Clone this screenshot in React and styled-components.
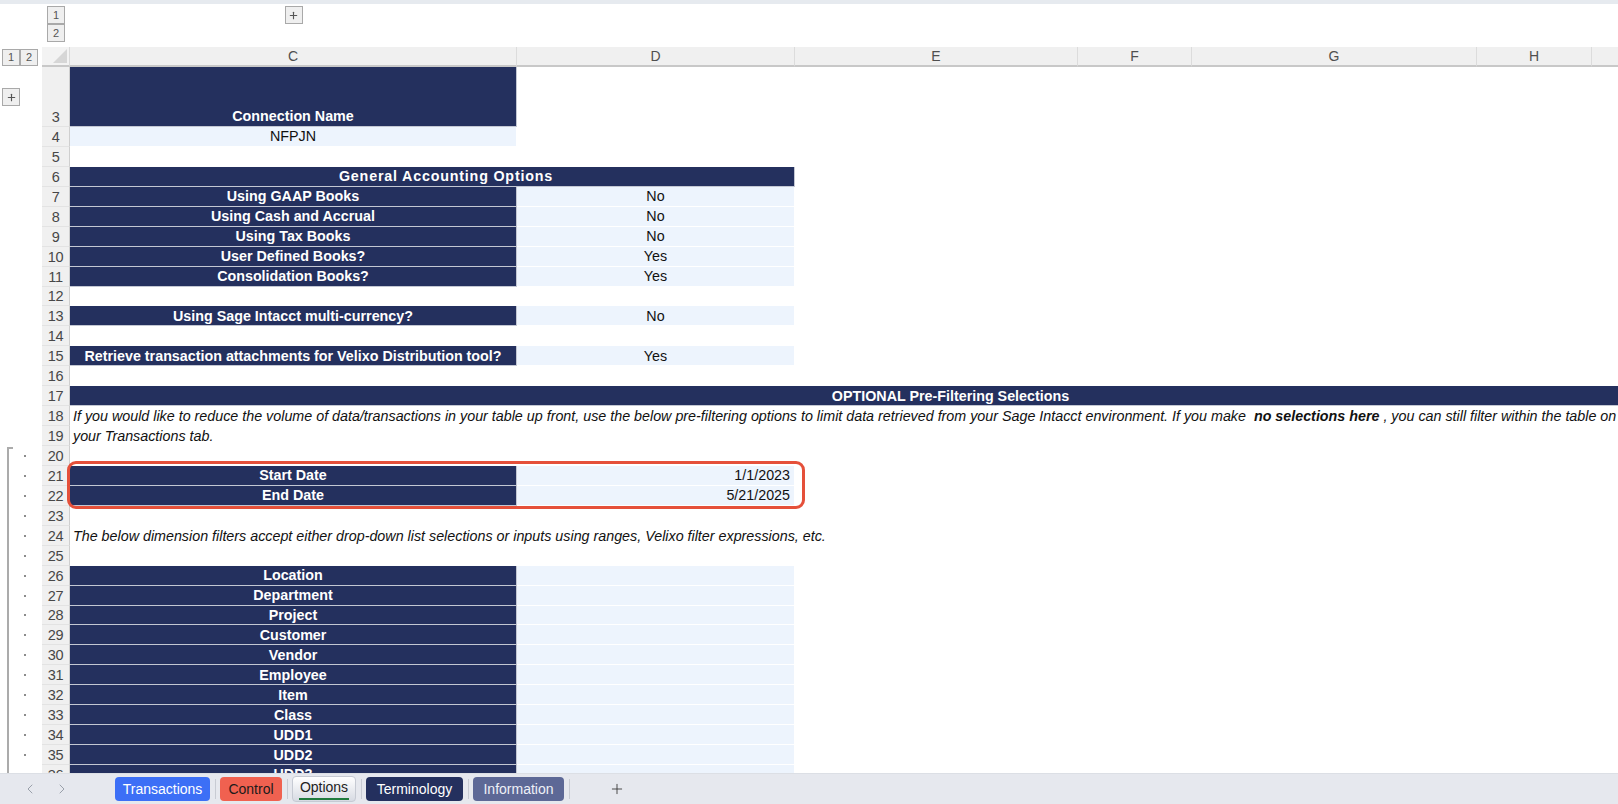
import { createGlobalStyle, styled, css } from "styled-components";
import { ChevronLeft, ChevronRight, Plus } from "lucide-react";

const COLS = "42px 28px 447px 278px 283px 114px 285px 115px 240px";
const NAVY = "#24305e";
const PALE = "#edf4fd";

const GlobalStyle = createGlobalStyle`
  html, body {
    margin: 0;
    padding: 0;
    overflow: hidden;
    background: #fff;
  }
  body {
    font-family: "Liberation Sans", Arial, sans-serif;
  }
  * {
    box-sizing: border-box;
  }
`;

const Page = styled.div`
  width: 1618px;
  height: 804px;
  display: flex;
  flex-direction: column;
  overflow: hidden;
`;

const TopStrip = styled.div`
  flex: none;
  height: 4px;
  background: #e6eaef;
`;

const OutlineTop = styled.div`
  flex: none;
  height: 43px;
  padding-top: 2px;
  display: grid;
  grid-template-columns: ${COLS};
`;

const LevelStack = styled.div`
  grid-column: 2;
  display: flex;
  flex-direction: column;
  align-items: center;
`;

const OutlineBtn = styled.div`
  width: 18px;
  height: ${(p) => p.$h || 18}px;
  border: 1px solid #a9a9a9;
  background: #efefef;
  color: #555;
  font-size: 11px;
  display: flex;
  align-items: center;
  justify-content: center;
  & + & {
    margin-top: ${(p) => (p.$row ? 0 : -1)}px;
  }
`;

const CollapseSlot = styled.div`
  grid-column: 3;
  display: flex;
  justify-content: center;
  align-items: flex-start;
`;

const Sheet = styled.div`
  flex: 1;
  overflow: hidden;
  position: relative;
`;

const Row = styled.div`
  display: grid;
  grid-template-columns: ${COLS};
  height: ${(p) => p.$h || 19.95}px;
`;

const LevelRow = styled.div`
  display: flex;
  padding-left: 2px;
  align-items: center;
`;

const Corner = styled.div`
  background: #f3f3f3;
  border-bottom: 2px solid #c8c8c8;
  border-right: 1px solid #dadada;
  display: flex;
  justify-content: flex-end;
  align-items: flex-end;
  padding: 0 2px 2px 0;
  &::after {
    content: "";
    width: 0;
    height: 0;
    border-style: solid;
    border-width: 0 0 14px 14px;
    border-color: transparent transparent #d6d6d6 transparent;
  }
`;

const ColHead = styled.div`
  background: #f0f0f0;
  border-bottom: 2px solid #c8c8c8;
  border-right: 1px solid #dcdcdc;
  color: #4f4f4f;
  font-size: 14px;
  display: flex;
  align-items: center;
  justify-content: center;
`;

const OutlineCell = styled.div`
  display: flex;
  align-items: ${(p) => (p.$top ? "flex-start" : "center")};
  padding-left: ${(p) => (p.$top ? 2 : 7)}px;
  padding-top: ${(p) => (p.$top ? 21 : 0)}px;
`;

const Bracket = styled.span`
  align-self: stretch;
  width: 6px;
  border-left: 2px solid #ababab;
  ${(p) =>
    p.$first &&
    css`
      border-top: 2px solid #ababab;
      margin-top: 1px;
    `}
`;

const Dot = styled.span`
  width: 2px;
  height: 2px;
  background: #8c8c8c;
  margin-left: 11px;
`;

const RowNum = styled.div`
  background: #f0f0f0;
  border-right: 1px solid #cfcfcf;
  border-bottom: 1px solid #e3e3e3;
  color: #474747;
  font-size: 14.5px;
  letter-spacing: -0.4px;
  display: flex;
  align-items: flex-end;
  justify-content: center;
  padding-bottom: 1px;
`;

const tones = {
  dark: css`
    background: ${NAVY};
    color: #fff;
    font-weight: bold;
    border-bottom: 1px solid #c3c7d3;
    border-right: 1px solid #c3c7d3;
  `,
  light: css`
    background: ${PALE};
    color: #111;
    border-bottom: 1px solid #fff;
    border-right: 1px solid #fff;
  `,
};

const Cell = styled.div`
  grid-column: span ${(p) => p.$span || 1};
  display: flex;
  align-items: ${(p) => (p.$bottom ? "flex-end" : "center")};
  justify-content: ${(p) =>
    p.$align === "right" ? "flex-end" : p.$align === "left" ? "flex-start" : "center"};
  padding: 0 4px ${(p) => (p.$bottom ? 2 : 0)}px ${(p) => p.$indent || 4}px;
  font-size: 14.3px;
  letter-spacing: ${(p) => p.$spread || 0}px;
  white-space: nowrap;
  overflow: hidden;
  ${(p) => tones[p.$tone]}
`;

const Note = styled.div`
  grid-column: 3 / -1;
  display: flex;
  align-items: center;
  padding-left: 3px;
  font-size: 14.3px;
  font-style: italic;
  color: #111;
  white-space: pre;
  b {
    font-weight: bold;
  }
`;

const Highlight = styled.div`
  position: relative;
  &::after {
    content: "";
    position: absolute;
    left: 67px;
    width: 732px;
    top: -5px;
    bottom: -3px;
    border: 3px solid #e5503a;
    border-radius: 9px;
    pointer-events: none;
  }
`;

const TabBar = styled.div`
  flex: none;
  height: 31px;
  background: #e6e8ee;
  border-top: 1px solid #dcdfe5;
  display: flex;
  align-items: center;
  padding-left: 22px;
  color: #9aa0aa;
`;

const NavGroup = styled.div`
  display: flex;
  gap: 16px;
  margin-right: 45px;
`;

const tabColors = {
  blue: css`
    background: #3c6ff6;
    color: #fff;
  `,
  red: css`
    background: #f06150;
    color: #1b1b1b;
  `,
  navy: css`
    background: ${NAVY};
    color: #fff;
  `,
  slate: css`
    background: #5d6896;
    color: #eef0f7;
  `,
  active: css`
    background: linear-gradient(#ffffff, #d7dbe3);
    color: #222;
    border: 1px solid #c6cad3;
    height: 26px;
    align-self: flex-start;
    margin-top: 2px;
    flex-direction: column;
    justify-content: flex-start;
    padding-top: 2px;
  `,
};

const Tab = styled.div`
  height: 24px;
  width: ${(p) => p.$w}px;
  border-radius: 4px;
  font-size: 14px;
  line-height: 17px;
  display: flex;
  align-items: center;
  justify-content: center;
  ${(p) => tabColors[p.$color]}
`;

const Underline = styled.span`
  width: 50px;
  height: 2px;
  background: #1f7a3d;
  margin-top: 2px;
`;

const TabSep = styled.span`
  width: 1px;
  height: 20px;
  background: #c8cbd3;
  margin: 0 4px 0 5px;
`;

const AddSheet = styled.div`
  margin-left: 35px;
  color: #333;
  display: flex;
`;

const options = [
  ["Using GAAP Books", "No"],
  ["Using Cash and Accrual", "No"],
  ["Using Tax Books", "No"],
  ["User Defined Books?", "Yes"],
  ["Consolidation Books?", "Yes"],
];

const dims = [
  "Location",
  "Department",
  "Project",
  "Customer",
  "Vendor",
  "Employee",
  "Item",
  "Class",
  "UDD1",
  "UDD2",
  "UDD3",
  "UDD4",
  "UDD5",
];

const heads = ["C", "D", "E", "F", "G", "H", ""];

const Gutter = ({ n }) => {
  if (n < 20) return <OutlineCell />;
  return (
    <OutlineCell>
      <Bracket $first={n === 20} />
      <Dot />
    </OutlineCell>
  );
};

const Line = ({ n, h, children }) => (
  <Row $h={h}>
    <Gutter n={n} />
    <RowNum>{n}</RowNum>
    {children}
  </Row>
);

const Pair = ({ n, label, value, align }) => (
  <Line n={n}>
    <Cell $tone="dark">{label}</Cell>
    <Cell $tone="light" $align={align}>
      {value}
    </Cell>
  </Line>
);

export default function App() {
  return (
    <Page>
      <GlobalStyle />
      <TopStrip />
      <OutlineTop>
        <LevelStack>
          <OutlineBtn>1</OutlineBtn>
          <OutlineBtn>2</OutlineBtn>
        </LevelStack>
        <CollapseSlot>
          <OutlineBtn>
            <Plus size={11} strokeWidth={2.5} />
          </OutlineBtn>
        </CollapseSlot>
      </OutlineTop>

      <Sheet>
        <Row $h={20}>
          <LevelRow>
            <OutlineBtn $row $h={17}>1</OutlineBtn>
            <OutlineBtn $row $h={17}>2</OutlineBtn>
          </LevelRow>
          <Corner />
          {heads.map((h, i) => (
            <ColHead key={i}>{h}</ColHead>
          ))}
        </Row>

        <Row $h={60}>
          <OutlineCell $top>
            <OutlineBtn>
              <Plus size={11} strokeWidth={2.5} />
            </OutlineBtn>
          </OutlineCell>
          <RowNum>3</RowNum>
          <Cell $tone="dark" $bottom>
            Connection Name
          </Cell>
        </Row>
        <Line n={4}>
          <Cell $tone="light">NFPJN</Cell>
        </Line>
        <Line n={5} />
        <Line n={6}>
          <Cell $tone="dark" $span={2} $indent={32} $spread={0.8}>
            General Accounting Options
          </Cell>
        </Line>
        {options.map(([label, value], i) => (
          <Pair key={label} n={7 + i} label={label} value={value} />
        ))}
        <Line n={12} />
        <Pair n={13} label="Using Sage Intacct multi-currency?" value="No" />
        <Line n={14} />
        <Pair
          n={15}
          label="Retrieve transaction attachments for Velixo Distribution tool?"
          value="Yes"
        />
        <Line n={16} />
        <Line n={17}>
          <Cell $tone="dark" $span={7}>
            OPTIONAL Pre-Filtering Selections
          </Cell>
        </Line>
        <Line n={18}>
          <Note>
            If you would like to reduce the volume of data/transactions in your table up
            front, use the below pre-filtering options to limit data retrieved from your
            Sage Intacct environment. If you make  <b>no selections here</b> , you can
            still filter within the table on
          </Note>
        </Line>
        <Line n={19}>
          <Note>your Transactions tab.</Note>
        </Line>
        <Line n={20} />
        <Highlight>
          <Pair n={21} label="Start Date" value="1/1/2023" align="right" />
          <Pair n={22} label="End Date" value="5/21/2025" align="right" />
        </Highlight>
        <Line n={23} />
        <Line n={24}>
          <Note>
            The below dimension filters accept either drop-down list selections or inputs
            using ranges, Velixo filter expressions, etc.
          </Note>
        </Line>
        <Line n={25} />
        {dims.map((d, i) => (
          <Pair key={d} n={26 + i} label={d} value="" />
        ))}
      </Sheet>

      <TabBar>
        <NavGroup>
          <ChevronLeft size={16} strokeWidth={1.5} />
          <ChevronRight size={16} strokeWidth={1.5} />
        </NavGroup>
        <Tab $color="blue" $w={95}>Transactions</Tab>
        <TabSep />
        <Tab $color="red" $w={62}>Control</Tab>
        <TabSep />
        <Tab $color="active" $w={64}>
          Options
          <Underline />
        </Tab>
        <TabSep />
        <Tab $color="navy" $w={97}>Terminology</Tab>
        <TabSep />
        <Tab $color="slate" $w={91}>Information</Tab>
        <TabSep />
        <AddSheet>
          <Plus size={16} strokeWidth={1.3} />
        </AddSheet>
      </TabBar>
    </Page>
  );
}
